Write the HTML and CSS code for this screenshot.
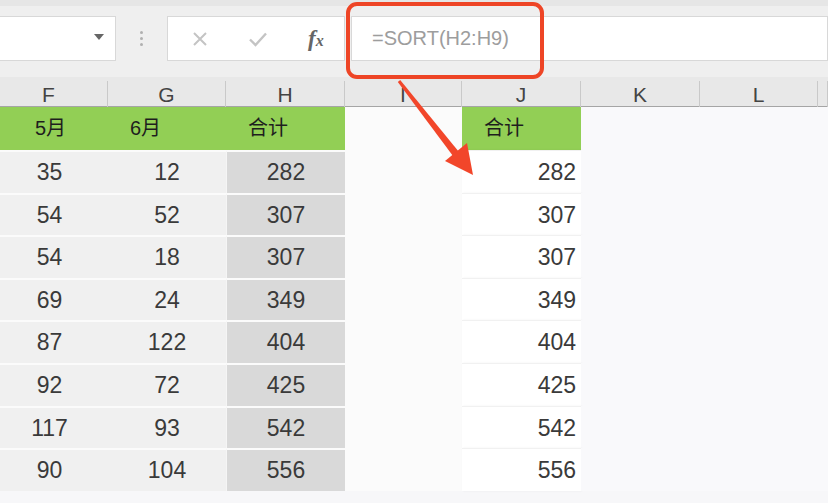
FILE: index.html
```html
<!DOCTYPE html>
<html lang="zh-CN">
<head>
    <meta charset="UTF-8">
    <meta name="viewport" content="width=device-width, initial-scale=1.0">
    <title>SORT</title>
    <link rel="stylesheet" href="styles.css">
</head>
<body>
    <div class="screen">
        <div class="toolbar">
            <div class="namebox"><span class="drop"></span></div>
            <div class="grip"><i></i><i></i><i></i></div>
            <div class="fxbox">
                <svg class="ico" width="18" height="18" viewBox="0 0 18 18"><path d="M3 3L15 15M15 3L3 15" stroke="#c4c4c4" stroke-width="2" fill="none"/></svg>
                <svg class="ico" width="22" height="18" viewBox="0 0 22 18"><path d="M3 9.5L8.5 15L19 3.5" stroke="#c4c4c4" stroke-width="2.4" fill="none"/></svg>
                <span class="fx">f<span class="sub">x</span></span>
            </div>
            <div class="formula">=SORT(H2:H9)</div>
        </div>

        <div class="colheads">
            <div>F</div><div>G</div><div>H</div><div>I</div><div>J</div><div>K</div><div>L</div><div></div>
        </div>

        <div class="sheet">
            <div class="row head">
                <div class="c g first">5月</div><div class="c g">6月</div><div class="c g">合计</div><div class="blank"></div><div class="c g res-h">合计</div><div class="rest"></div>
            </div>
            <div class="row"><div class="c">35</div><div class="c">12</div><div class="c sum">282</div><div class="blank"></div><div class="res">282</div><div class="rest"></div></div>
            <div class="row"><div class="c">54</div><div class="c">52</div><div class="c sum">307</div><div class="blank"></div><div class="res">307</div><div class="rest"></div></div>
            <div class="row"><div class="c">54</div><div class="c">18</div><div class="c sum">307</div><div class="blank"></div><div class="res">307</div><div class="rest"></div></div>
            <div class="row"><div class="c">69</div><div class="c">24</div><div class="c sum">349</div><div class="blank"></div><div class="res">349</div><div class="rest"></div></div>
            <div class="row"><div class="c">87</div><div class="c">122</div><div class="c sum">404</div><div class="blank"></div><div class="res">404</div><div class="rest"></div></div>
            <div class="row"><div class="c">92</div><div class="c">72</div><div class="c sum">425</div><div class="blank"></div><div class="res">425</div><div class="rest"></div></div>
            <div class="row"><div class="c">117</div><div class="c">93</div><div class="c sum">542</div><div class="blank"></div><div class="res">542</div><div class="rest"></div></div>
            <div class="row"><div class="c">90</div><div class="c">104</div><div class="c sum">556</div><div class="blank"></div><div class="res">556</div><div class="rest"></div></div>
        </div>

        <!-- red annotation: box around the formula + arrow to J -->
        <svg class="mark" width="828" height="503" viewBox="0 0 828 503">
            <rect x="348" y="4" width="194" height="73" rx="9" fill="none" stroke="#ee4526" stroke-width="4"/>
            <polygon points="397.8,82 400.2,80 459,152 453,156" fill="#f2462a"/>
            <polygon points="473,175 445,161 467,143" fill="#f2462a"/>
        </svg>
    </div>
</body>
</html>
```

FILE: styles.css
```css
body {
    margin: 0;
    font-family: "Liberation Sans", Arial, sans-serif;
    background-color: #f7f7f9;
}

.screen {
    position: relative;
    width: 828px;
    height: 503px;
    overflow: hidden;
}

.toolbar {
    display: flex;
    align-items: flex-start;
    height: 77px;
    padding-top: 15px;
    box-sizing: border-box;
    background-color: #efefef;
    border-top: 6px solid #e6e6e6;
}

.namebox,
.fxbox,
.formula {
    height: 45px;
    background-color: #fff;
    border: 1px solid #d8d8d8;
    box-sizing: border-box;
    margin-top: -5px;
}

.namebox {
    position: relative;
    width: 118px;
    margin-left: -2px;
}

.drop {
    position: absolute;
    right: 11px;
    top: 17px;
    border-left: 5px solid transparent;
    border-right: 5px solid transparent;
    border-top: 6px solid #666;
}

.grip {
    width: 51px;
    height: 45px;
    margin-top: -5px;
    display: flex;
    flex-direction: column;
    align-items: center;
    justify-content: center;
    gap: 3px;
}

.grip i {
    width: 3px;
    height: 3px;
    border-radius: 50%;
    background-color: #b0b0b0;
}

.fxbox {
    width: 178px;
    display: flex;
    align-items: center;
    padding-left: 23px;
    gap: 38px;
}

.fxbox .ico {
    display: block;
}

.fx {
    font-family: "Liberation Serif", serif;
    font-style: italic;
    font-weight: bold;
    font-size: 23px;
    color: #666;
    margin-left: 1px;
}

.fx .sub {
    font-size: 16px;
}

.formula {
    flex: 1;
    margin-left: 6px;
    padding-left: 20px;
    line-height: 43px;
    font-size: 20px;
    color: #9d9d9d;
}

.colheads {
    display: grid;
    grid-template-columns: 108px 118px 119px 117px 119px 119px 118px 1fr;
    height: 30px;
    background-color: #e8e8e8;
    border-bottom: 1px solid #a5a5a5;
    box-sizing: border-box;
}

.colheads div {
    border-right: 1px solid #c9c9c9;
    margin-top: 4px;
    text-align: center;
    font-size: 21px;
    line-height: 28px;
    color: #444;
}

.colheads div:first-child {
    text-indent: -10px;
}

.sheet {
    display: flex;
    flex-direction: column;
}

.row {
    display: grid;
    grid-template-columns: 108px 118px 119px 117px 119px 1fr;
    height: 42.6px;
}

.row.head {
    height: 43px;
}

.c {
    background-color: #f0f0f0;
    border-top: 2px solid #fbfbfb;
    box-sizing: border-box;
    text-align: center;
    font-size: 23px;
    line-height: 40px;
    color: #3a3a3a;
}

.row > .c:first-child {
    padding-right: 9px;
}

.c.sum {
    background-color: #d9d9d9;
    border-left: 1px solid #f5f5f5;
}

.c.g {
    background-color: #92cf55;
    border-top: none;
    text-align: left;
    padding-left: 22px;
    font-family: "Liberation Sans", "Noto Sans CJK SC", sans-serif;
    font-size: 20px;
    line-height: 43px;
    color: #1e1e1e;
}

.row > .c.g.first {
    padding-left: 35px;
    padding-right: 0;
}

.blank {
    background-color: #fbfbfb;
}

.res {
    background-color: #fff;
    border-top: 1px solid #f1f1f1;
    box-shadow: 1px 0 2px rgba(0, 0, 0, 0.06);
    text-align: right;
    padding-right: 5px;
    font-size: 23px;
    line-height: 42px;
    color: #3a3a3a;
}

.rest {
    background-color: #f9f9fb;
}

.mark {
    position: absolute;
    left: 0;
    top: 0;
    pointer-events: none;
}
```
